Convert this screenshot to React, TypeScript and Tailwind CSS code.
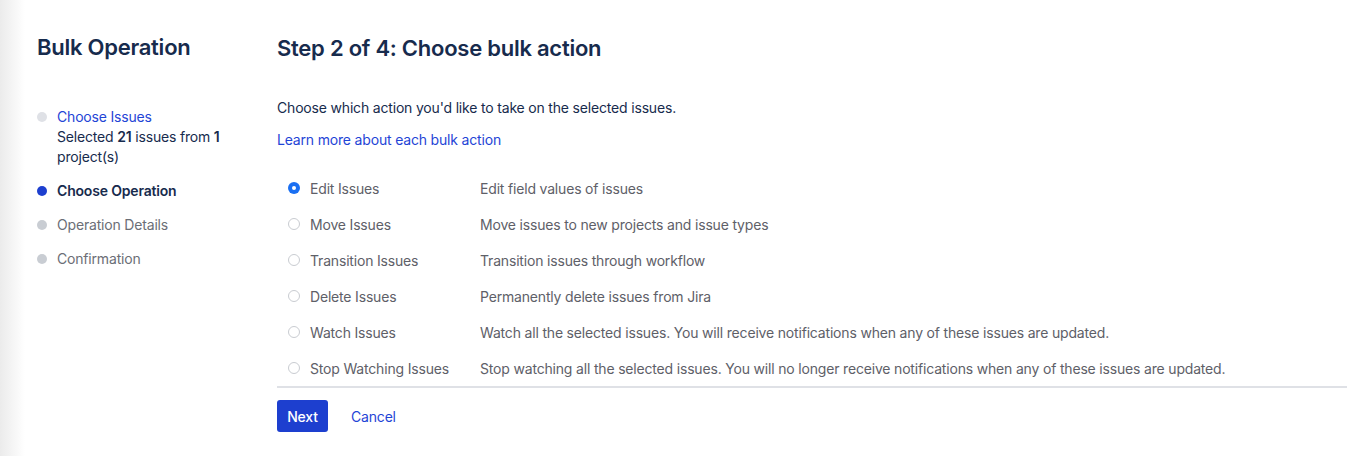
import React from "react";

const options = [
  ["Edit Issues", "Edit field values of issues"],
  ["Move Issues", "Move issues to new projects and issue types"],
  ["Transition Issues", "Transition issues through workflow"],
  ["Delete Issues", "Permanently delete issues from Jira"],
  ["Watch Issues", "Watch all the selected issues. You will receive notifications when any of these issues are updated."],
  ["Stop Watching Issues", "Stop watching all the selected issues. You will no longer receive notifications when any of these issues are updated."],
];

export default function App() {
  return (
    <div
      className="flex w-[1368px] h-[456px] bg-white text-[#172b4d] overflow-hidden tracking-[-0.18px]"
      style={{ fontFamily: "Inter, 'Noto Sans', sans-serif" }}
    >
      <aside className="w-[277px] shrink-0 bg-gradient-to-r from-[#ebebeb] via-white via-[9%] to-white pl-[37px] pt-[33px]">
        <h1 className="text-[22px] leading-[28px] font-semibold tracking-[-0.25px] text-[#172b4d]">Bulk Operation</h1>
        <ul className="mt-[46px] text-[14px] leading-[20px]">
          <li className="flex">
            <span className="w-[10px] h-[10px] rounded-full bg-[#dfe1e6] mt-[5px] shrink-0" />
            <div className="ml-[10px]">
              <div className="text-[#1f45d6]">Choose Issues</div>
              <div className="text-[#172b4d] w-[180px]">
                Selected <b className="font-semibold">21</b> issues from <b className="font-semibold">1</b> project(s)
              </div>
            </div>
          </li>
          <li className="flex mt-[14px]">
            <span className="w-[10px] h-[10px] rounded-full bg-[#1d3fcf] mt-[5px] shrink-0" />
            <span className="ml-[10px] font-semibold">Choose Operation</span>
          </li>
          <li className="flex mt-[14px]">
            <span className="w-[10px] h-[10px] rounded-full bg-[#c9cdd3] mt-[5px] shrink-0" />
            <span className="ml-[10px] text-[#6b6e76]">Operation Details</span>
          </li>
          <li className="flex mt-[14px]">
            <span className="w-[10px] h-[10px] rounded-full bg-[#c9cdd3] mt-[5px] shrink-0" />
            <span className="ml-[10px] text-[#6b6e76]">Confirmation</span>
          </li>
        </ul>
      </aside>
      <main className="flex-1 pt-[34px] pr-[21px]">
        <h2 className="text-[22px] leading-[28px] font-semibold tracking-[-0.25px]">Step 2 of 4: Choose bulk action</h2>
        <p className="mt-[36px] text-[14px] leading-[20px]">Choose which action you'd like to take on the selected issues.</p>
        <a className="block mt-[12px] text-[14px] leading-[20px] text-[#1f45d6]">Learn more about each bulk action</a>
        <div className="mt-[20px] border-b-2 border-[#dfe1e6]">
          {options.map(([label, desc], i) => (
            <div key={label} className="flex items-center h-[36px] text-[14px] text-[#5e6068]">
              <span className="w-[33px] flex justify-center">
                {i === 0 ? (
                  <span className="w-[12px] h-[12px] rounded-full bg-[#1a6ff2] flex items-center justify-center">
                    <span className="w-[4px] h-[4px] rounded-full bg-white" />
                  </span>
                ) : (
                  <span className="w-[12px] h-[12px] rounded-full border border-[#c9ccd1] bg-white" />
                )}
              </span>
              <span className="w-[170px]">{label}</span>
              <span>{desc}</span>
            </div>
          ))}
        </div>
        <div className="flex items-center mt-[12px]">
          <button className="h-[32px] w-[51px] rounded-[3px] bg-[#1d3fcf] text-white text-[14px] font-medium">Next</button>
          <a className="ml-[23px] text-[14px] text-[#1f45d6]">Cancel</a>
        </div>
      </main>
    </div>
  );
}
